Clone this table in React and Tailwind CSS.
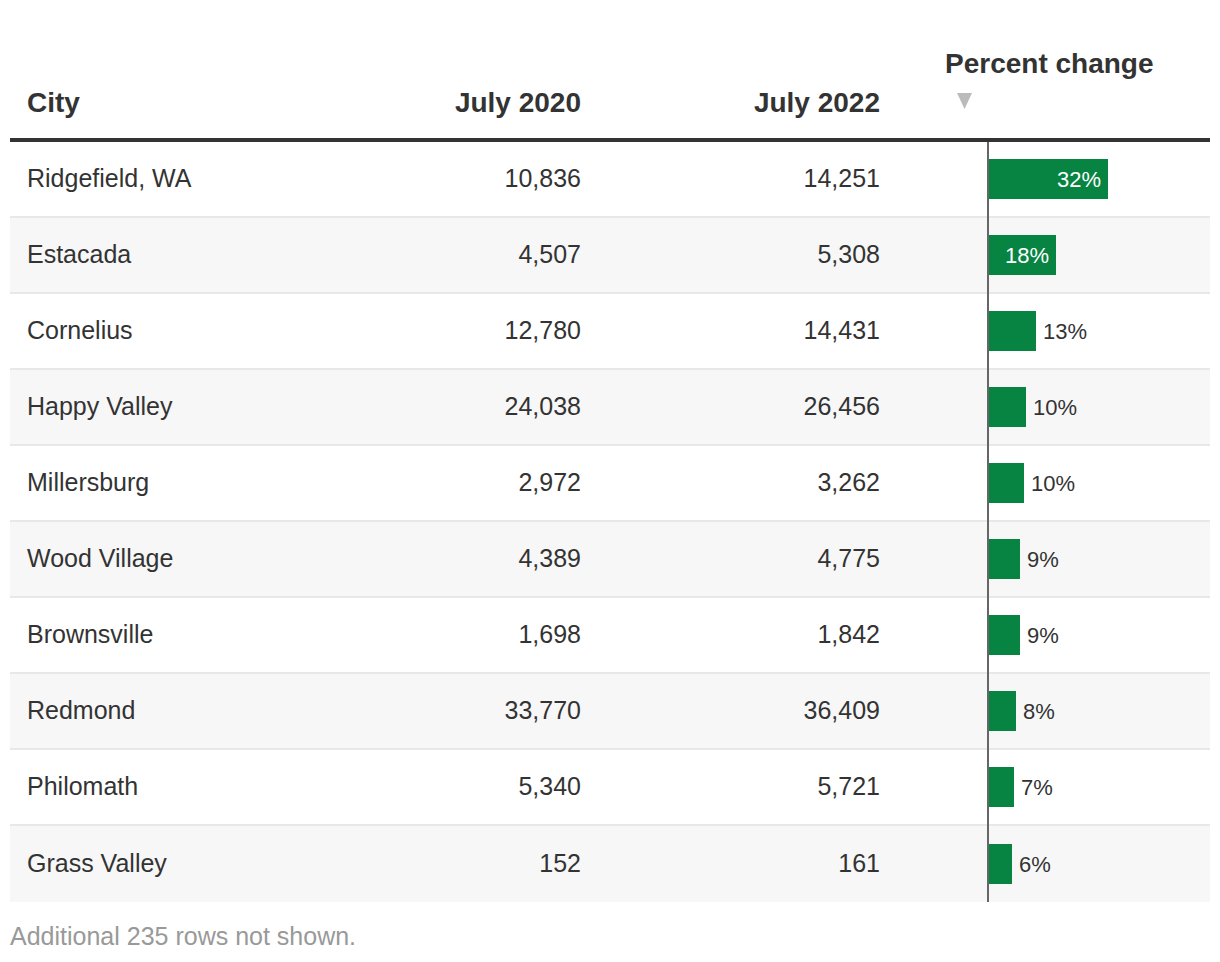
import React from "react";

const rows = [
  { city: "Ridgefield, WA", a: "10,836", b: "14,251", pct: "32%", w: 119, inside: true },
  { city: "Estacada", a: "4,507", b: "5,308", pct: "18%", w: 67, inside: true },
  { city: "Cornelius", a: "12,780", b: "14,431", pct: "13%", w: 47 },
  { city: "Happy Valley", a: "24,038", b: "26,456", pct: "10%", w: 37 },
  { city: "Millersburg", a: "2,972", b: "3,262", pct: "10%", w: 35 },
  { city: "Wood Village", a: "4,389", b: "4,775", pct: "9%", w: 31 },
  { city: "Brownsville", a: "1,698", b: "1,842", pct: "9%", w: 31 },
  { city: "Redmond", a: "33,770", b: "36,409", pct: "8%", w: 27 },
  { city: "Philomath", a: "5,340", b: "5,721", pct: "7%", w: 25 },
  { city: "Grass Valley", a: "152", b: "161", pct: "6%", w: 23 },
];

const cols = "grid grid-cols-[300px_287px_348px_265px]";

export default function App() {
  return (
    <div
      className="min-h-screen bg-white pt-[44px] px-[10px] text-[#333]"
      style={{ fontFamily: '"Liberation Sans", Arial, sans-serif' }}
    >
      <div className="w-[1200px]">
        <div className={`${cols} h-[98px] items-end pb-[18px] border-b-4 border-[#333] text-[28px] font-bold leading-[34px]`}>
          <div className="pl-[17px]">City</div>
          <div className="pr-[16px] text-right">July 2020</div>
          <div className="pr-[65px] text-right">July 2022</div>
          <div className="flex flex-col">
            <span>Percent change</span>
            <div className="h-[39px] pt-[12px] pl-[12px]">
              <svg width="15" height="16" viewBox="0 0 15 16">
                <polygon points="0,0 15,0 7.5,16" fill="#bbb" />
              </svg>
            </div>
          </div>
        </div>

        <div className="relative">
          {rows.map((r, i) => (
            <div
              key={r.city}
              className={`${cols} h-[76px] items-center text-[25px] ${
                i % 2 === 1 ? "bg-[#f7f7f7]" : "bg-white"
              } ${i < rows.length - 1 ? "border-b-2 border-[#e8e8e8]" : ""}`}
            >
              <div className="pl-[17px]">{r.city}</div>
              <div className="pr-[16px] text-right">{r.a}</div>
              <div className="pr-[65px] text-right">{r.b}</div>
              <div className="flex items-center pl-[44px]">
                <div
                  className="h-[40px] bg-[#078442] flex items-center justify-end"
                  style={{ width: r.w }}
                >
                  {r.inside && <span className="pr-[7px] text-[22px] text-white">{r.pct}</span>}
                </div>
                {!r.inside && <span className="pl-[7px] text-[22px] text-[#333]">{r.pct}</span>}
              </div>
            </div>
          ))}
          <div className="absolute top-0 bottom-0 left-[977px] w-[2px] bg-[#666]" />
        </div>

        <p className="mt-[16px] text-[25px] text-[#999]">Additional 235 rows not shown.</p>
      </div>
    </div>
  );
}
